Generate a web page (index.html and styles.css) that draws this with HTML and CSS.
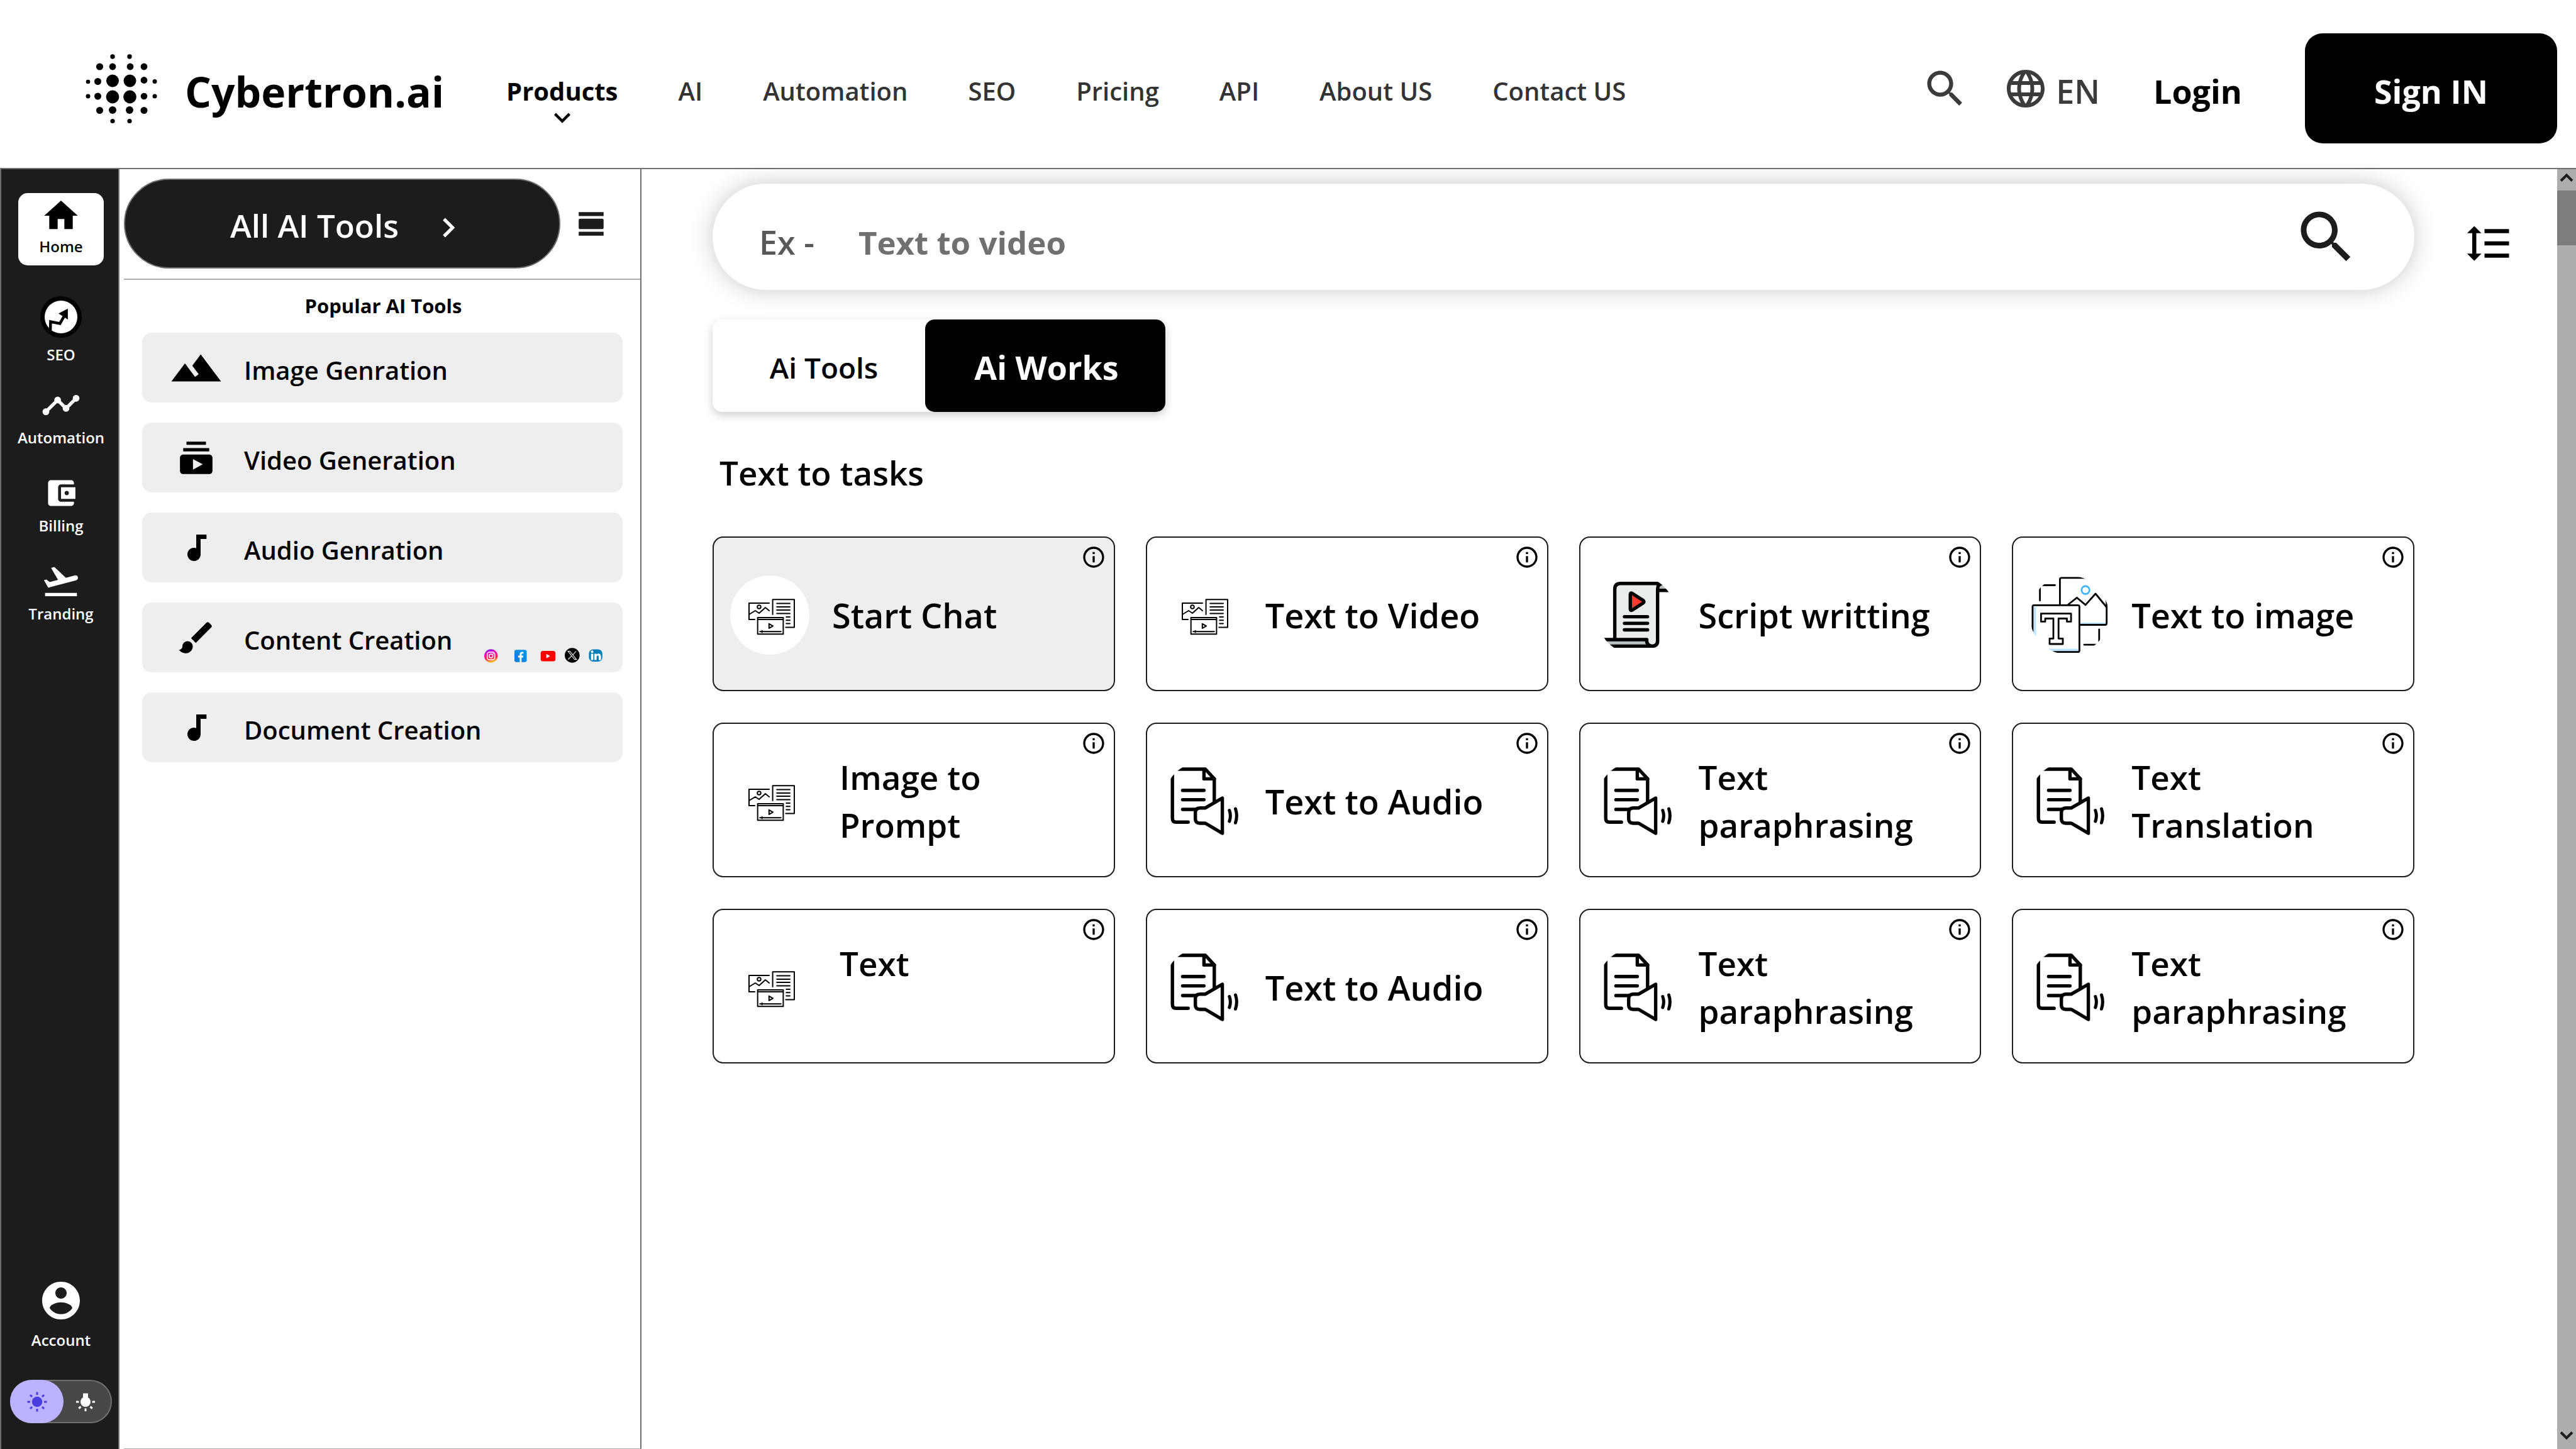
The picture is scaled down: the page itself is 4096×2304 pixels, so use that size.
FILE: index.html
```html
<!DOCTYPE html>
<html lang="en">
<head>
<meta charset="utf-8">
<meta name="viewport" content="width=device-width, initial-scale=1">
<title>Cybertron.ai</title>
<link rel="stylesheet" href="styles.css">
</head>
<body>
<svg class="sprite" aria-hidden="true">
  <defs>
    <clipPath id="round"><circle cx="63" cy="63" r="63"/></clipPath>
    <linearGradient id="insta" x1="0.2" y1="0" x2="0.45" y2="1">
      <stop offset="0" stop-color="#7a1cff"/><stop offset="0.35" stop-color="#f503b0"/><stop offset="0.7" stop-color="#fb2a4e"/><stop offset="1" stop-color="#ffc928"/>
    </linearGradient>
    <linearGradient id="fb" x1="0" y1="1" x2="1" y2="0">
      <stop offset="0" stop-color="#0a78dc"/><stop offset="1" stop-color="#0c9be4"/>
    </linearGradient>
    <symbol id="i-search" viewBox="0 0 24 24"><path d="M15.5 14h-.79l-.28-.27C15.41 12.59 16 11.11 16 9.5 16 5.91 13.09 3 9.5 3S3 5.91 3 9.5 5.91 16 9.5 16c1.61 0 3.09-.59 4.23-1.57l.27.28v.79l5 4.99L20.49 19l-4.99-5zm-6 0C7.01 14 5 11.99 5 9.5S7.01 5 9.5 5 14 7.01 14 9.5 11.99 14 9.5 14z"/></symbol>
    <symbol id="i-info" viewBox="0 0 24 24"><path d="M11 7h2v2h-2zm0 4h2v6h-2zm1-9C6.48 2 2 6.48 2 12s4.48 10 10 10 10-4.48 10-10S17.52 2 12 2zm0 18c-4.41 0-8-3.59-8-8s3.59-8 8-8 8 3.59 8 8-3.59 8-8 8z"/></symbol>
    <symbol id="i-note" viewBox="0 0 24 24"><path d="M12 3v9.28c-.47-.17-.97-.28-1.5-.28C8.01 12 6 14.01 6 16.5S8.01 21 10.5 21c2.31 0 4.2-1.75 4.45-4H15V6h4V3h-7z"/></symbol>
    <symbol id="i-media" viewBox="0 0 126 126">
      <g fill="none" stroke="#000" stroke-width="2" stroke-linejoin="round" stroke-linecap="round">
        <path d="M62 44H30v26h9M30 62l10-6 6 4 10-9 6 5"/><circle cx="46" cy="50" r="2.8"/>
        <path d="M67.600 62V38.300H102V82.400H88.300M74.200 44.600H95M74.200 49.900H95M74.200 55.100H95M74.200 60.400H95M89.200 66H95M89.200 71.200H95M89.200 76.400H95"/>
        <path d="M43.700 67.100H84.400V93.300H43.700zM43.700 70H84.400M61.800 76.800v7.200l6.200-3.700zM47.200 89.200H80.800M50.700 88v2.400"/>
      </g>
    </symbol>
    <symbol id="i-audio" viewBox="0 0 126 126">
      <g fill="none" stroke="#000" stroke-width="5.400" stroke-linejoin="round" stroke-linecap="round">
        <g clip-path="url(#round)"><path d="M39.200 96.200H20q-5.800 0-5.800-6V20q0-8 8-8H66.600L80.800 27.400V65"/></g>
        <path d="M64.400 14V27.400H80.800M30.400 45.700H64.400M30.400 60.600H64.400M30.400 76H50"/>
        <path d="M66.600 73.700L93.600 58V114L66.600 98H58q-7.300 0-7.300-7V81q0-7.300 7.300-7.300z"/>
        <path d="M104.800 77.500q3.200 9 0 17.500M114.500 75q3.800 11 0 22.300" stroke-width="5"/>
      </g>
    </symbol>
    <symbol id="i-script" viewBox="0 0 126 126">
      <g clip-path="url(#round)">
        <path d="M96.700 24V18q1-5 5-5.200H130V24z" fill="#b9c1c3"/>
        <path d="M28.600 102V22q0-9.200 9-9.200H103q-6.300 1-6.300 9V104q0 8-9 8-8-1-8-10z" fill="#e9eeed"/>
        <path d="M5 102H79.500q0 8 6 10.400H5z" fill="#b9c1c3"/>
        <g fill="none" stroke="#000" stroke-width="5.400" stroke-linejoin="round">
          <path d="M28.600 102V22q0-9.200 9-9.200H130M103 13q-6.300 1-6.300 9V104q0 8.400-9 8.400H5M99 23.700H130M5 102H79.500q-1 9 8 10.400"/>
          <path d="M53.300 30q0-3 3-1.500L73.500 39.500q3 2.300 0 4.500L56.300 55q-3 1.500-3-1.500z" fill="#ff3a30"/>
          <path d="M44 65.600H80.700M44 76.100H80.700M44 86.500H80.700" stroke-linecap="round"/>
        </g>
      </g>
    </symbol>
    <symbol id="i-image" viewBox="0 0 126 126">
      <g clip-path="url(#round)" fill="none" stroke="#000" stroke-width="2.800" stroke-linejoin="round" stroke-linecap="round">
        <path d="M80 76.300H121" stroke="#bde5ff"/>
        <path d="M48.400 46V6.400q0-2.500 2.500-2.500H120.200q2.500 0 2.500 2.500V76q0 2.500-2.500 2.500H81M61.300 46.500L75.400 35.300 89.100 46.900 105 29 123 51"/>
        <circle cx="89.100" cy="23.300" r="6.300" stroke="#42b6ff"/>
        <path d="M40.500 15.500H16.600V39.800M110.800 85.800V110.100H86.900"/>
        <path d="M8.200 50V120M8 118.700H78" stroke="#bde5ff" stroke-width="4.400" stroke-linecap="butt"/>
        <rect x="4.900" y="47.300" width="74.500" height="74.400" rx="2.500"/>
        <path d="M18.400 60.700H66.100V73.400H59.500V68.500H46.200V100.300H53V109H32V100.300H38V68.500H25V73.400H18.400z"/>
      </g>
    </symbol>
  </defs>
</svg>

<header class="topbar">
  <a class="brand" href="#">
    <svg class="brand-mark" viewBox="0 0 116 112" aria-hidden="true">
      <circle cx="43" cy="5" r="3.700"/><circle cx="70" cy="5" r="3.700"/>
      <circle cx="22.500" cy="21" r="5.600"/><circle cx="43" cy="21" r="5.400"/><circle cx="71" cy="21" r="5.400"/><circle cx="93" cy="21" r="5.400"/>
      <circle cx="4" cy="45" r="3.300"/><circle cx="19.500" cy="44.500" r="5.500"/><circle cx="43" cy="43.500" r="10"/><circle cx="70.500" cy="43.500" r="10"/><circle cx="93" cy="42.500" r="5.400"/><circle cx="110" cy="44.500" r="3.500"/>
      <circle cx="4" cy="68" r="3.500"/><circle cx="19.500" cy="68" r="5.500"/><circle cx="43" cy="69" r="10.400"/><circle cx="70.500" cy="69" r="10.400"/><circle cx="93" cy="68" r="5.300"/><circle cx="110" cy="68" r="3.500"/>
      <circle cx="22.500" cy="90.500" r="5.500"/><circle cx="43" cy="90" r="6"/><circle cx="70" cy="90" r="6"/><circle cx="93" cy="90.500" r="5.500"/>
      <circle cx="43" cy="107.500" r="3.600"/><circle cx="70" cy="107.500" r="3.600"/>
    </svg>
    <span class="brand-name">Cybertron.ai</span>
  </a>
  <nav class="main-nav" aria-label="Main">
    <a class="nav-link nav-link--active" href="#">Products
      <svg class="nav-caret" viewBox="0 0 24 24" aria-hidden="true"><path d="M16.590 8.590L12 13.170 7.410 8.590 6 10l6 6 6-6z"/></svg>
    </a>
    <a class="nav-link" href="#">AI</a>
    <a class="nav-link" href="#">Automation</a>
    <a class="nav-link" href="#">SEO</a>
    <a class="nav-link" href="#">Pricing</a>
    <a class="nav-link" href="#">API</a>
    <a class="nav-link" href="#">About US</a>
    <a class="nav-link" href="#">Contact US</a>
  </nav>
  <div class="actions">
    <button class="icon-button" type="button" aria-label="Search"><svg class="icon-76"><use href="#i-search"/></svg></button>
    <button class="language" type="button">
      <svg class="icon-72" viewBox="0 0 24 24" aria-hidden="true"><path d="M11.990 2C6.470 2 2 6.480 2 12s4.470 10 9.990 10C17.520 22 22 17.520 22 12S17.520 2 11.990 2zm6.930 6h-2.950c-.32-1.250-.78-2.450-1.380-3.560 1.840.63 3.370 1.910 4.330 3.560zM12 4.040c.83 1.200 1.480 2.530 1.910 3.960h-3.820c.43-1.430 1.080-2.760 1.910-3.960zM4.260 14C4.100 13.360 4 12.690 4 12s.1-1.360.26-2h3.380c-.08.66-.14 1.320-.14 2 0 .68.06 1.340.14 2H4.260zm.82 2h2.950c.32 1.250.78 2.450 1.380 3.560-1.840-.63-3.370-1.900-4.330-3.560zm2.950-8H5.080c.96-1.660 2.490-2.930 4.330-3.560C8.810 5.550 8.350 6.750 8.030 8zM12 19.960c-.83-1.200-1.480-2.530-1.910-3.960h3.820c-.43 1.430-1.080 2.760-1.910 3.960zM14.340 14H9.660c-.09-.66-.16-1.320-.16-2 0-.68.07-1.350.16-2h4.680c.09.65.16 1.320.16 2 0 .68-.07 1.340-.16 2zm.25 5.560c.6-1.110 1.060-2.310 1.380-3.560h2.950c-.96 1.650-2.490 2.930-4.330 3.560zM16.360 14c.08-.66.14-1.320.14-2 0-.68-.06-1.340-.14-2h3.380c.16.64.26 1.310.26 2s-.1 1.360-.26 2h-3.380z"/></svg>
      <span class="action-text">EN</span>
    </button>
    <a class="login action-text" href="#">Login</a>
    <button class="sign-in" type="button"><span class="action-text">Sign IN</span></button>
  </div>
</header>

<div class="shell">
  <nav class="rail" aria-label="Sections">
    <a class="rail-item rail-item--active" href="#">
      <svg class="rail-icon" viewBox="0 0 24 24" aria-hidden="true"><path d="M10 20v-6h4v6h5v-8h3L12 3 2 12h3v8z"/></svg>
      <span>Home</span>
    </a>
    <a class="rail-item rail-item--badge" href="#">
      <svg class="rail-icon" viewBox="0 0 66 66" aria-hidden="true"><circle cx="33" cy="33" r="33" fill="#000"/><circle cx="33" cy="33" r="26"/><path d="M16 57L16.400 40.500 31.300 43.400 39 30" fill="none" stroke="#000" stroke-width="4.500"/><path d="M29 27.600L43.900 19.700V37z" fill="#000"/></svg>
      <span>SEO</span>
    </a>
    <a class="rail-item" href="#">
      <svg class="rail-icon" viewBox="0 0 24 24" aria-hidden="true"><path d="M23 8c0 1.100-.9 2-2 2-.18 0-.35-.02-.51-.07l-3.560 3.550c.05.16.07.34.07.52 0 1.100-.9 2-2 2s-2-.9-2-2c0-.18.02-.36.07-.52l-2.550-2.550c-.16.05-.34.07-.52.07s-.36-.02-.52-.07l-4.550 4.560c.05.16.07.33.07.51 0 1.100-.9 2-2 2s-2-.9-2-2 .9-2 2-2c.18 0 .35.02.51.07l4.560-4.550C8.020 9.360 8 9.180 8 9c0-1.100.9-2 2-2s2 .9 2 2c0 .18-.02.36-.07.52l2.550 2.550c.16-.05.34-.07.52-.07s.36.02.52.07l3.550-3.560C19.020 8.350 19 8.180 19 8c0-1.100.9-2 2-2s2 .9 2 2z"/></svg>
      <span>Automation</span>
    </a>
    <a class="rail-item" href="#">
      <svg class="rail-icon" viewBox="-2 -2 28 28" aria-hidden="true"><path d="M21 18v1c0 1.100-.9 2-2 2H5c-1.110 0-2-.9-2-2V5c0-1.100.89-2 2-2h14c1.100 0 2 .9 2 2v1h-9c-1.110 0-2 .9-2 2v8c0 1.100.89 2 2 2h9zm-9-2h10V8H12v8zm4-2.500c-.83 0-1.500-.67-1.500-1.500s.67-1.500 1.500-1.500 1.500.67 1.500 1.500-.67 1.500-1.500 1.500z"/></svg>
      <span>Billing</span>
    </a>
    <a class="rail-item" href="#">
      <svg class="rail-icon" viewBox="0 0 24 24" aria-hidden="true"><path d="M2.500 19h19v2h-19zm19.570-9.360c-.21-.8-1.040-1.280-1.840-1.060L14.920 10l-6.900-6.430-1.930.51 4.140 7.170-4.970 1.330-1.970-1.540-1.450.39 1.820 3.160.77 1.330 1.600-.43 5.310-1.420 4.350-1.160L21 11.490c.81-.23 1.280-1.050 1.070-1.850z"/></svg>
      <span>Tranding</span>
    </a>
    <a class="rail-item rail-item--account" href="#">
      <svg class="icon-72" viewBox="0 0 24 24" aria-hidden="true"><path d="M12 2C6.480 2 2 6.480 2 12s4.480 10 10 10 10-4.480 10-10S17.520 2 12 2zm0 3c1.660 0 3 1.340 3 3s-1.340 3-3 3-3-1.340-3-3 1.340-3 3-3zm0 14.200c-2.500 0-4.710-1.280-6-3.220.03-1.990 4-3.080 6-3.080 1.990 0 5.970 1.090 6 3.080-1.290 1.940-3.500 3.220-6 3.220z"/></svg>
      <span>Account</span>
    </a>
    <label class="theme">
      <input class="theme-input" type="checkbox" role="switch" aria-label="Dark theme">
      <span class="theme-knob">
        <svg class="theme-icon" viewBox="-16 -16 32 32" aria-hidden="true"><circle r="8.200"/><path d="M0-15.500v4.500M0 15.500v-4.500M-15.500 0h4.500M15.500 0h-4.500M-11-11l3 3M11-11l-3 3M-11 11l3-3M11 11l-3-3" stroke-width="3"/></svg>
      </span>
      <span class="theme-dark">
        <svg class="theme-icon" viewBox="-16 -16 32 32" aria-hidden="true"><circle r="8"/><path d="M-4-13.500h8V-5h-8z" stroke="none"/><path d="M0 15v-4.500M-15 0h4.500M15 0h-4.500M-10.600 10.600l3-3M10.600 10.600l-3-3" stroke-width="3"/></svg>
      </span>
    </label>
  </nav>

  <aside class="panel">
    <div class="panel-head">
      <button class="all-tools" type="button">All AI Tools
        <svg class="all-tools-caret" viewBox="0 0 24 24" aria-hidden="true"><path d="M10 6L8.590 7.410 13.170 12l-4.580 4.590L10 18l6-6z"/></svg>
      </button>
      <button class="icon-button" type="button" aria-label="Change view">
        <svg class="icon-50" viewBox="0 0 24 24" aria-hidden="true"><path d="M2 21h19v-3H2v3zM20 8H3c-.55 0-1 .45-1 1v6c0 .55.45 1 1 1h17c.55 0 1-.45 1-1V9c0-.55-.45-1-1-1zM2 3v3h19V3H2z"/></svg>
      </button>
    </div>
    <h2 class="panel-title">Popular AI Tools</h2>
    <ul class="popular">
      <li><a class="popular-item" href="#">
        <span class="popular-icon"><svg class="icon-86" viewBox="0 0 24 24" aria-hidden="true"><path d="M14 6l-3.750 5 2.850 3.800-1.600 1.200C9.810 13.750 7 10 7 10l-6 8h22L14 6z"/></svg></span>
        <span class="popular-label">Image Genration</span></a></li>
      <li><a class="popular-item" href="#">
        <span class="popular-icon"><svg class="icon-62" viewBox="0 0 24 24" aria-hidden="true"><path d="M20 8H4V6h16v2zm-2-6H6v2h12V2zm4 10v8c0 1.100-.9 2-2 2H4c-1.100 0-2-.9-2-2v-8c0-1.100.9-2 2-2h16c1.100 0 2 .9 2 2zm-6 4l-6-3.270v6.530L16 16z"/></svg></span>
        <span class="popular-label">Video Generation</span></a></li>
      <li><a class="popular-item" href="#">
        <span class="popular-icon"><svg class="icon-56"><use href="#i-note"/></svg></span>
        <span class="popular-label">Audio Genration</span></a></li>
      <li><a class="popular-item" href="#">
        <span class="popular-icon"><svg class="icon-66" viewBox="0 0 24 24" aria-hidden="true"><path d="M7 14c-1.660 0-3 1.340-3 3 0 1.310-1.160 2-2 2 .92 1.220 2.490 2 4 2 2.210 0 4-1.790 4-4 0-1.660-1.340-3-3-3zm13.710-9.370l-1.340-1.340c-.39-.39-1.020-.39-1.410 0L9 12.250 11.750 15l8.960-8.960c.39-.39.39-1.020 0-1.410z"/></svg></span>
        <span class="popular-label">Content Creation</span>
        <svg class="socials" viewBox="0 0 188 24" role="img" aria-label="Instagram, Facebook, YouTube, X, LinkedIn">
          <ellipse cx="10.700" cy="13" rx="10.700" ry="10.700" fill="url(#insta)"/>
          <g fill="none" stroke="#fff" stroke-width="1.500"><rect x="4.700" y="7" width="12" height="12" rx="3.500"/><circle cx="10.700" cy="13" r="3"/></g><circle cx="14.300" cy="9.500" r="0.900" fill="#fff"/>
          <rect x="48" y="3.300" width="19.500" height="19.500" rx="3" fill="url(#fb)"/>
          <path d="M59.300 22.800v-7.300h2.500l.4-2.900h-2.900v-1.800c0-1 .4-1.500 1.500-1.500h1.500V6.700c-.5-.1-1.200-.2-2-.2-2.400 0-3.900 1.400-3.900 3.900v2.200h-2.500v2.900h2.500v7.300z" fill="#fff"/>
          <rect x="89.700" y="5" width="23.400" height="16.500" rx="3.500" fill="#f00"/><path d="M98.700 9.700v7l6-3.500z" fill="#fff"/>
          <circle cx="139.800" cy="12" r="11.800" fill="#000"/>
          <path d="M133.200 5.500h3l10.300 13h-3zM146 5.500l-5.300 5.800M139 12.900l-5.600 5.600" fill="none" stroke="#fff" stroke-width="1.100"/>
          <rect x="166.400" y="2.500" width="21.400" height="19.500" rx="7" fill="#007ebb"/>
          <path d="M169.700 9.500h3.700v10h-3.700zM175 9.500h3.400v1.400c1.800-2.600 7.200-2.200 7.200 3v5.600h-3.600v-5c0-3-3.400-2.800-3.400 0v5H175z" fill="#fff"/><circle cx="171.500" cy="6.300" r="2" fill="#fff"/>
        </svg></a></li>
      <li><a class="popular-item" href="#">
        <span class="popular-icon"><svg class="icon-56"><use href="#i-note"/></svg></span>
        <span class="popular-label">Document Creation</span></a></li>
    </ul>
  </aside>

  <main class="main">
    <div class="search-row">
      <form class="search" role="search">
        <label class="search-label" for="q">Ex -</label>
        <input class="search-input" id="q" type="text" placeholder="Text to video">
        <button class="icon-button" type="submit" aria-label="Search"><svg class="icon-108"><use href="#i-search"/></svg></button>
      </form>
      <button class="icon-button sort" type="button" aria-label="Line spacing">
        <svg class="icon-78" viewBox="0 0 24 24" aria-hidden="true"><path d="M6 7h2.500L5 3.500 1.500 7H4v10H1.500L5 20.500 8.500 17H6V7zm4-2v2h12V5H10zm0 14h12v-2H10v2zm0-6h12v-2H10v2z"/></svg>
      </button>
    </div>

    <div class="content">
      <div class="tabs" role="tablist">
        <button class="tab" type="button" role="tab" aria-selected="false">Ai Tools</button>
        <button class="tab tab--active" type="button" role="tab" aria-selected="true">Ai Works</button>
      </div>
      <h1 class="section-title">Text to tasks</h1>
      <div class="cards">
        <a class="card card--active" href="#"><span class="card-icon"><svg><use href="#i-media"/></svg></span><span class="card-label">Start Chat</span><svg class="card-info"><use href="#i-info"/></svg></a>
        <a class="card" href="#"><span class="card-icon"><svg><use href="#i-media"/></svg></span><span class="card-label">Text to Video</span><svg class="card-info"><use href="#i-info"/></svg></a>
        <a class="card" href="#"><span class="card-icon"><svg><use href="#i-script"/></svg></span><span class="card-label">Script writting</span><svg class="card-info"><use href="#i-info"/></svg></a>
        <a class="card" href="#"><span class="card-icon"><svg><use href="#i-image"/></svg></span><span class="card-label">Text to image</span><svg class="card-info"><use href="#i-info"/></svg></a>

        <a class="card card--wide-gap" href="#"><span class="card-icon"><svg><use href="#i-media"/></svg></span><span class="card-label card-label--two">Image to<br>Prompt</span><svg class="card-info"><use href="#i-info"/></svg></a>
        <a class="card" href="#"><span class="card-icon"><svg><use href="#i-audio"/></svg></span><span class="card-label">Text to Audio</span><svg class="card-info"><use href="#i-info"/></svg></a>
        <a class="card" href="#"><span class="card-icon"><svg><use href="#i-audio"/></svg></span><span class="card-label card-label--two">Text<br>paraphrasing</span><svg class="card-info"><use href="#i-info"/></svg></a>
        <a class="card" href="#"><span class="card-icon"><svg><use href="#i-audio"/></svg></span><span class="card-label card-label--two">Text<br>Translation</span><svg class="card-info"><use href="#i-info"/></svg></a>

        <a class="card card--wide-gap" href="#"><span class="card-icon"><svg><use href="#i-media"/></svg></span><span class="card-label card-label--two">Text</span><svg class="card-info"><use href="#i-info"/></svg></a>
        <a class="card" href="#"><span class="card-icon"><svg><use href="#i-audio"/></svg></span><span class="card-label">Text to Audio</span><svg class="card-info"><use href="#i-info"/></svg></a>
        <a class="card" href="#"><span class="card-icon"><svg><use href="#i-audio"/></svg></span><span class="card-label card-label--two">Text<br>paraphrasing</span><svg class="card-info"><use href="#i-info"/></svg></a>
        <a class="card" href="#"><span class="card-icon"><svg><use href="#i-audio"/></svg></span><span class="card-label card-label--two">Text<br>paraphrasing</span><svg class="card-info"><use href="#i-info"/></svg></a>
      </div>
    </div>
  </main>

  <div class="scrollbar">
    <button class="scroll-button" type="button" aria-label="Scroll up"><svg viewBox="0 0 22 14"><path d="M2 12.500L11 3.500l9 9"/></svg></button>
    <div class="scroll-thumb"></div>
    <button class="scroll-button scroll-button--down" type="button" aria-label="Scroll down"><svg viewBox="0 0 22 14"><path d="M2 1.500l9 9 9-9"/></svg></button>
  </div>
</div>
</body>
</html>
```
FILE: styles.css
```css
* { box-sizing: border-box; }

body {
  margin: 0;
  min-height: 100vh;
  display: flex;
  flex-direction: column;
  background: #fff;
  color: #000;
  font-family: "Open Sans", "Noto Sans", sans-serif;
  font-weight: 600;
}

a { color: inherit; text-decoration: none; }
button, input { margin: 0; padding: 0; border: 0; background: none; color: inherit; font: inherit; }
button { cursor: pointer; }
svg { display: block; fill: currentColor; flex: none; }
h1, h2, ul { margin: 0; padding: 0; font-weight: inherit; }
ul { list-style: none; }

.sprite { position: absolute; width: 0; height: 0; }
.icon-button { flex: none; }
.icon-50 { width: 50px; height: 50px; }
.icon-56 { width: 56px; height: 56px; }
.icon-62 { width: 62px; height: 62px; }
.icon-66 { width: 66px; height: 66px; }
.icon-72 { width: 72px; height: 72px; }
.icon-76 { width: 76px; height: 76px; }
.icon-78 { width: 78px; height: 78px; }
.icon-86 { width: 86px; height: 86px; }
.icon-108 { width: 108px; height: 108px; }

/* Top bar */
.topbar {
  display: flex;
  align-items: center;
  padding: 53px 30px 39px 136px;
  border-bottom: 2px solid #707070;
}
.brand { display: flex; align-items: center; gap: 42px; }
.brand-mark { width: 116px; height: 112px; }
.brand-name { padding-top: 8px; font-size: 66px; font-weight: 700; line-height: 90px; }
.main-nav { display: flex; gap: 96px; margin-left: 99px; color: #333; }
.nav-link { position: relative; padding-top: 8px; font-size: 40px; line-height: 56px; white-space: nowrap; }
.nav-link--active { color: #000; font-weight: 700; }
.nav-caret { position: absolute; top: 52px; left: 0; right: 0; width: 52px; height: 52px; margin: 0 auto; }
.actions { display: flex; align-items: center; margin-left: auto; color: #3b3b3b; }
.action-text { padding-top: 8px; font-size: 52px; line-height: 72px; }
.language { display: flex; align-items: center; gap: 12px; margin-left: 54px; }
.login { margin-left: 85px; color: #000; font-weight: 700; }
.sign-in {
  display: flex;
  align-items: center;
  justify-content: center;
  width: 401px;
  height: 175px;
  margin-left: 100px;
  border-radius: 28px;
  background: #000;
  color: #fff;
  font-weight: 700;
}

.shell { flex: 1; display: flex; }

/* Dark icon rail */
.rail {
  flex: none;
  display: flex;
  flex-direction: column;
  align-items: center;
  gap: 39px;
  width: 190px;
  padding: 38px 0 41px 4px;
  border: solid #707070;
  border-width: 0 2px;
  background: #1c1c1c;
  color: #fff;
}
.rail-item {
  display: flex;
  flex-direction: column;
  align-items: center;
  gap: 3px;
  font-size: 24px;
  line-height: 32px;
}
.rail-icon { width: 64px; height: 66px; }
.rail-item--active {
  gap: 0;
  width: 136px;
  margin-bottom: 10px;
  padding: 3px 0 14px;
  border-radius: 15px;
  background: #fff;
  color: #000;
}
.rail-item--badge { gap: 11px; margin-bottom: -8px; }
.rail-item--badge .rail-icon { width: 66px; }
.rail-item--account { gap: 11px; margin-top: auto; margin-bottom: 8px; }
.theme {
  position: relative;
  flex: none;
  display: flex;
  width: 162px;
  height: 69px;
}
.theme-input {
  position: absolute;
  inset: 0;
  border: 2px solid #707070;
  border-radius: 35px;
  background: #474747;
  appearance: none;
}
.theme-knob, .theme-dark { position: relative; display: flex; align-items: center; justify-content: center; }
.theme-knob { width: 85px; border-radius: 35px; background: #bab3ff; color: #4b3ce0; }
.theme-dark { width: 70px; }
.theme-icon { width: 32px; height: 32px; stroke: currentColor; stroke-width: 0; }

/* Tool panel */
.panel {
  flex: none;
  width: 823px;
  margin-left: 7px;
  border-right: 2px solid #707070;
  border-bottom: 1px solid #adadad;
}
.panel-head {
  display: flex;
  align-items: center;
  gap: 25px;
  padding: 15px 0 16px;
  border-bottom: 2px solid #adadad;
}
.all-tools {
  display: flex;
  align-items: center;
  gap: 48px;
  width: 694px;
  height: 143px;
  padding: 4px 0 0 167px;
  border: 2px solid #707070;
  border-radius: 72px;
  background: #1c1c1c;
  color: #fff;
  font-size: 51px;
}
.all-tools-caret { width: 62px; height: 62px; margin-top: 8px; }
.panel-head .icon-button { color: #1c1c1c; }
.panel-title {
  padding: 20px 0 22px 4px;
  font-size: 31px;
  font-weight: 700;
  line-height: 42px;
  text-align: center;
}
.popular { display: grid; gap: 32px; padding: 0 28px 0 29px; }
.popular-item {
  display: flex;
  align-items: center;
  gap: 33px;
  height: 111px;
  padding: 0 32px 0 43px;
  border-radius: 15px;
  background: #eee;
}
.popular-icon { flex: none; display: flex; justify-content: center; width: 86px; }
.popular-label { padding-top: 8px; font-size: 40px; line-height: 56px; white-space: nowrap; }
.socials { align-self: flex-end; width: 188px; height: 24px; margin: 0 0 15px auto; }

/* Main area */
.main { flex: 1; min-width: 0; padding: 23px 70px 64px 113px; }
.search-row { display: flex; align-items: center; gap: 79px; }
.search {
  flex: 1;
  display: flex;
  align-items: center;
  height: 169px;
  padding: 0 86px 0 74px;
  border-radius: 85px;
  background: #fff;
  box-shadow: 0 0 36px rgba(0, 0, 0, 0.22);
  font-size: 51px;
}
.search-label { padding-top: 16px; color: #595959; font-size: 52px; line-height: 72px; }
.search-input {
  flex: 1;
  min-width: 0;
  margin-left: 70px;
  padding-top: 16px;
  outline: 0;
  font-weight: 700;
  line-height: 72px;
}
.search-input::placeholder { color: #707070; opacity: 1; }
.search .icon-button { color: #1c1c1c; }
.sort { padding-top: 20px; }

.content { padding: 47px 157px 0 0; }
.tabs {
  display: inline-flex;
  border-radius: 15px;
  background: #fff;
  box-shadow: 0 5px 14px rgba(0, 0, 0, 0.2);
}
.tab { width: 338px; height: 147px; padding: 4px 0 0 16px; border-radius: 15px; font-size: 46px; }
.tab--active { width: 382px; padding-left: 4px; background: #000; color: #fff; font-size: 52px; font-weight: 700; }
.section-title { padding: 61px 0 65px 11px; font-size: 53px; line-height: 72px; }
.cards { display: grid; grid-template-columns: repeat(4, 1fr); gap: 50px 49px; }
.card {
  position: relative;
  display: flex;
  align-items: center;
  gap: 36px;
  height: 246px;
  padding: 4px 0 0 26px;
  border: 2px solid #1c1c1c;
  border-radius: 17px;
}
.card--wide-gap { gap: 48px; }
.card--active { background: #eee; }
.card--active .card-icon { background: #fff; }
.card-icon { flex: none; width: 126px; height: 126px; border-radius: 50%; }
.card-icon svg { width: 126px; height: 126px; }
.card-label { font-size: 54px; line-height: 76px; }
.card-label--two { min-height: 152px; font-size: 53px; }
.card-info { position: absolute; top: 11px; right: 12px; width: 40px; height: 40px; }

/* Drawn scrollbar */
.scrollbar { flex: none; display: flex; flex-direction: column; width: 30px; background: #adadad; }
.scroll-button { display: flex; justify-content: center; height: 34px; padding-top: 6px; }
.scroll-button svg { width: 22px; height: 14px; fill: none; stroke: #1c1c1c; stroke-width: 4; }
.scroll-thumb { height: 87px; background: #7d7d7d; }
.scroll-button--down { margin-top: auto; }
```
